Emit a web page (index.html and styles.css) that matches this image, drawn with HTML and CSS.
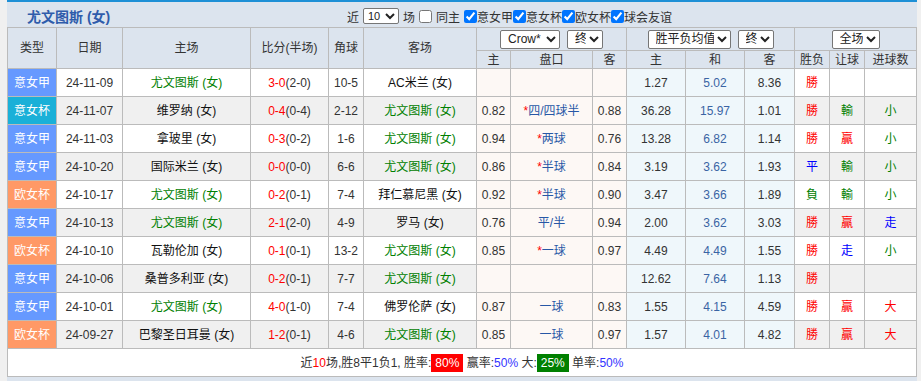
FILE: index.html
```html
<!DOCTYPE html>
<html lang="zh-CN">
<head>
    <meta charset="UTF-8">
    <title>尤文图斯 (女) - 近期战绩</title>
    <link rel="stylesheet" href="styles.css">
</head>
<body>
    <div class="panel">
        <div class="bar">
            <span class="team-title">尤文图斯 (女)</span>
            <div class="filters">
                <span>近</span>
                <select class="pick pick-num"><option>10</option></select>
                <span>场</span>
                <input type="checkbox" class="plain-box">
                <span>同主</span>
                <label class="tick"><input type="checkbox" checked>意女甲</label>
                <label class="tick"><input type="checkbox" checked>意女杯</label>
                <label class="tick"><input type="checkbox" checked>欧女杯</label>
                <label class="tick"><input type="checkbox" checked>球会友谊</label>
            </div>
        </div>

        <table class="matches">
            <colgroup>
                <col style="width:49px"><col style="width:66px"><col style="width:128px">
                <col style="width:78px"><col style="width:35px"><col style="width:113px">
                <col style="width:34px"><col style="width:82px"><col style="width:34px">
                <col style="width:59px"><col style="width:59px"><col style="width:50px">
                <col style="width:35px"><col style="width:35px"><col style="width:52px">
            </colgroup>
            <thead>
                <tr class="head-top">
                    <th rowspan="2">类型</th>
                    <th rowspan="2">日期</th>
                    <th rowspan="2">主场</th>
                    <th rowspan="2">比分(半场)</th>
                    <th rowspan="2">角球</th>
                    <th rowspan="2">客场</th>
                    <th colspan="3">
                        <div class="pick-pair">
                            <select class="pick pick-crow"><option>Crow*</option></select>
                            <select class="pick pick-end"><option>终</option></select>
                        </div>
                    </th>
                    <th colspan="3">
                        <div class="pick-pair">
                            <select class="pick pick-avg"><option>胜平负均值</option></select>
                            <select class="pick pick-end"><option>终</option></select>
                        </div>
                    </th>
                    <th colspan="3">
                        <div class="pick-pair">
                            <select class="pick pick-half"><option>全场</option></select>
                        </div>
                    </th>
                </tr>
                <tr class="head-sub">
                    <th>主</th><th>盘口</th><th>客</th>
                    <th>主</th><th>和</th><th>客</th>
                    <th>胜负</th><th>让球</th><th>进球数</th>
                </tr>
            </thead>
            <tbody>
                <tr>
                    <td class="league serie">意女甲</td><td>24-11-09</td>
                    <td class="us">尤文图斯 (女)</td>
                    <td><span class="ft">3-0</span>(2-0)</td><td>10-5</td>
                    <td class="them">AC米兰 (女)</td>
                    <td class="ah"></td><td class="ah"></td><td class="ah"></td>
                    <td class="eu">1.27</td><td class="eu draw">5.02</td><td class="eu">8.36</td>
                    <td class="win">勝</td><td></td><td></td>
                </tr>
                <tr class="alt">
                    <td class="league cup">意女杯</td><td>24-11-07</td>
                    <td class="them">维罗纳 (女)</td>
                    <td><span class="ft">0-4</span>(0-4)</td><td>2-12</td>
                    <td class="us">尤文图斯 (女)</td>
                    <td class="ah">0.82</td><td class="ah line"><i>*</i>四/四球半</td><td class="ah">0.88</td>
                    <td class="eu">36.28</td><td class="eu draw">15.97</td><td class="eu">1.01</td>
                    <td class="win">勝</td><td class="lose">輸</td><td class="lose">小</td>
                </tr>
                <tr>
                    <td class="league serie">意女甲</td><td>24-11-03</td>
                    <td class="them">拿玻里 (女)</td>
                    <td><span class="ft">0-3</span>(0-2)</td><td>1-6</td>
                    <td class="us">尤文图斯 (女)</td>
                    <td class="ah">0.94</td><td class="ah line"><i>*</i>两球</td><td class="ah">0.76</td>
                    <td class="eu">13.28</td><td class="eu draw">6.82</td><td class="eu">1.14</td>
                    <td class="win">勝</td><td class="win">贏</td><td class="lose">小</td>
                </tr>
                <tr class="alt">
                    <td class="league serie">意女甲</td><td>24-10-20</td>
                    <td class="them">国际米兰 (女)</td>
                    <td><span class="ft">0-0</span>(0-0)</td><td>6-6</td>
                    <td class="us">尤文图斯 (女)</td>
                    <td class="ah">0.86</td><td class="ah line"><i>*</i>半球</td><td class="ah">0.84</td>
                    <td class="eu">3.19</td><td class="eu draw">3.62</td><td class="eu">1.93</td>
                    <td class="push">平</td><td class="lose">輸</td><td class="lose">小</td>
                </tr>
                <tr>
                    <td class="league euro">欧女杯</td><td>24-10-17</td>
                    <td class="us">尤文图斯 (女)</td>
                    <td><span class="ft">0-2</span>(0-1)</td><td>7-4</td>
                    <td class="them">拜仁慕尼黑 (女)</td>
                    <td class="ah">0.92</td><td class="ah line"><i>*</i>半球</td><td class="ah">0.90</td>
                    <td class="eu">3.47</td><td class="eu draw">3.66</td><td class="eu">1.89</td>
                    <td class="lose">負</td><td class="lose">輸</td><td class="lose">小</td>
                </tr>
                <tr class="alt">
                    <td class="league serie">意女甲</td><td>24-10-13</td>
                    <td class="us">尤文图斯 (女)</td>
                    <td><span class="ft">2-1</span>(2-0)</td><td>4-9</td>
                    <td class="them">罗马 (女)</td>
                    <td class="ah">0.76</td><td class="ah line">平/半</td><td class="ah">0.94</td>
                    <td class="eu">2.00</td><td class="eu draw">3.62</td><td class="eu">3.03</td>
                    <td class="win">勝</td><td class="win">贏</td><td class="push">走</td>
                </tr>
                <tr>
                    <td class="league euro">欧女杯</td><td>24-10-10</td>
                    <td class="them">瓦勒伦加 (女)</td>
                    <td><span class="ft">0-1</span>(0-1)</td><td>13-2</td>
                    <td class="us">尤文图斯 (女)</td>
                    <td class="ah">0.85</td><td class="ah line"><i>*</i>一球</td><td class="ah">0.97</td>
                    <td class="eu">4.49</td><td class="eu draw">4.49</td><td class="eu">1.55</td>
                    <td class="win">勝</td><td class="push">走</td><td class="lose">小</td>
                </tr>
                <tr class="alt">
                    <td class="league serie">意女甲</td><td>24-10-06</td>
                    <td class="them">桑普多利亚 (女)</td>
                    <td><span class="ft">0-2</span>(0-1)</td><td>7-7</td>
                    <td class="us">尤文图斯 (女)</td>
                    <td class="ah"></td><td class="ah"></td><td class="ah"></td>
                    <td class="eu">12.62</td><td class="eu draw">7.64</td><td class="eu">1.13</td>
                    <td class="win">勝</td><td></td><td></td>
                </tr>
                <tr>
                    <td class="league serie">意女甲</td><td>24-10-01</td>
                    <td class="us">尤文图斯 (女)</td>
                    <td><span class="ft">4-0</span>(1-0)</td><td>7-4</td>
                    <td class="them">佛罗伦萨 (女)</td>
                    <td class="ah">0.87</td><td class="ah line">一球</td><td class="ah">0.83</td>
                    <td class="eu">1.55</td><td class="eu draw">4.15</td><td class="eu">4.59</td>
                    <td class="win">勝</td><td class="win">贏</td><td class="win">大</td>
                </tr>
                <tr class="alt">
                    <td class="league euro">欧女杯</td><td>24-09-27</td>
                    <td class="them">巴黎圣日耳曼 (女)</td>
                    <td><span class="ft">1-2</span>(0-1)</td><td>4-6</td>
                    <td class="us">尤文图斯 (女)</td>
                    <td class="ah">0.85</td><td class="ah line">一球</td><td class="ah">0.97</td>
                    <td class="eu">1.57</td><td class="eu draw">4.01</td><td class="eu">4.82</td>
                    <td class="win">勝</td><td class="win">贏</td><td class="win">大</td>
                </tr>
            </tbody>
            <tfoot>
                <tr>
                    <td colspan="15" class="summary">
                        近<span class="hot">10</span>场,胜8平1负1, 胜率:<span class="badge red">80%</span>
                        赢率:<span class="rate">50%</span> 大:<span class="badge green">25%</span>
                        单率:<span class="rate">50%</span>
                    </td>
                </tr>
            </tfoot>
        </table>
    </div>
</body>
</html>
```

FILE: styles.css
```css
* {
    box-sizing: border-box;
}

body {
    margin: 0;
    background: #f0f0f0;
    font-family: "Liberation Sans", "Noto Sans CJK SC", sans-serif;
    font-size: 12px;
    color: #333;
}

.panel {
    margin-left: 7px;
    width: 910px;
    min-height: 381px;
    background: #dce4ee;
    border-top: 2px solid #1e90d6;
}

/* title line */
.bar {
    display: flex;
    align-items: center;
    height: 25px;
    padding: 3px 0 0 20px;
}

.team-title {
    font-size: 14px;
    font-weight: bold;
    color: #2f5cab;
}

.filters {
    margin-left: auto;
    margin-right: 245px;
    display: flex;
    align-items: center;
    gap: 4px;
    color: #333;
}

.plain-box {
    margin: 0;
    width: 13px;
    height: 13px;
}

.filters .tick {
    display: inline-flex;
    align-items: center;
    margin-left: -4px;
}

.filters span + .tick {
    margin-left: 0;
}

.tick input {
    margin: 0;
    width: 13px;
    height: 13px;
}

.pick {
    font-family: "Liberation Sans", "Noto Sans CJK SC", sans-serif;
    font-size: 12px;
    color: #222;
    height: 19px;
    padding: 0 0 0 3px;
    margin: 0;
    background: #fff;
    border: 1px solid #767676;
    border-radius: 2px;
}

.pick-num { width: 36px; height: 16px; padding: 0; font-size: 11px; }
.pick-crow { width: 60px; }
.pick-end { width: 36px; }
.pick-avg { width: 83px; }
.pick-half { width: 48px; }

.pick-pair {
    display: flex;
    justify-content: center;
    gap: 7px;
}

/* table */
.matches {
    table-layout: fixed;
    border-collapse: collapse;
    width: 909px;
    background: #fff;
}

.matches th,
.matches td {
    border: 1px solid #bbb;
    text-align: center;
    padding: 0;
    white-space: nowrap;
    overflow: visible;
}

.matches th {
    background: #dce4ee;
    font-weight: normal;
    color: #333;
    line-height: 16px;
}

.head-top th {
    height: 23px;
}

.head-sub th {
    height: 18px;
}

.matches tbody td {
    height: 28px;
    line-height: 16px;
}

.matches tbody tr.alt td {
    background: #f0f0f0;
}

.matches td.league {
    color: #fff;
}

.matches td.serie,
.matches tr.alt td.serie { background: #6699ff; }
.matches td.cup,
.matches tr.alt td.cup { background: #1ab0d8; }
.matches td.euro,
.matches tr.alt td.euro { background: #ff9966; }

.us { color: #008000; }
.them { color: #111; }

.ft { color: #ff0000; }

.matches td.ah,
.matches tr.alt td.ah {
    background: #fdf8f5;
}

.matches td.eu,
.matches tr.alt td.eu {
    background: #eff7fb;
}

.line {
    color: #2757a6;
}

.line i {
    font-style: normal;
    color: #ff0000;
}

.draw {
    color: #3a64a4;
}

.win { color: #ff0000; }
.push { color: #0000ff; }
.lose { color: #008000; }

.summary {
    height: 28px;
    background: #fff;
    color: #333;
}

.hot { color: #ff0000; }
.rate { color: #3333ff; }

.badge {
    display: inline-block;
    color: #fff;
    padding: 1px 4px;
    line-height: 16px;
}

.badge.red { background: #ff0000; }
.badge.green { background: #008000; }
```
